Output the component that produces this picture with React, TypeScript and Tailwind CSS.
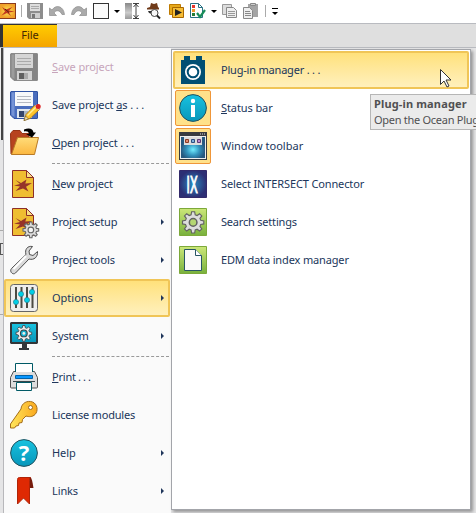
import React from 'react';

type IconProps = { children: React.ReactNode; size?: number; box?: number };
const Svg = ({ children, size = 28, box = 28 }: IconProps) => (
  <svg width={size} height={size} viewBox={`0 0 ${box} ${box}`} className="block shrink-0 overflow-visible">
    {children}
  </svg>
);

const Disk = ({ blue = false }: { blue?: boolean }) => (
  <Svg>
    <path d="M1 .5h26a.5.5 0 0 1 .5.5v26a.5.5 0 0 1-.5.5H4L.5 24V1z" fill={blue ? '#4a6dbd' : '#858585'} stroke={blue ? '#2f52a3' : '#8b8b8b'} />
    <path d="M1.5 1.5h3V26l-3-2z" fill={blue ? '#7593d6' : '#9c9c9c'} />
    <path d="M5 1h18v14H5z" fill={blue ? '#f7f8fa' : '#d6d6d6'} />
    <path d="M7 5.5h14M7 8.5h14M7 11.5h14" stroke={blue ? '#b5b9c2' : '#aaa'} />
    <path d="M7 18h15v9H7z" fill={blue ? '#dfe7ee' : '#d2d2d2'} />
    <path d="M9 20h5v6H9z" fill={blue ? '#34466c' : '#606060'} />
    <path d="M14 20h4v6h-4z" fill={blue ? '#a9b5c3' : '#aaa'} />
    {blue && (
      <>
        <path d="M14 29.5l2-6L25 14l4.5 4.5-9.500 9z" fill="#ffc52b" stroke="#a57416" strokeWidth=".8" />
        <path d="M17.500 24.500l9-9" stroke="#fff09b" strokeWidth="1.4" />
        <path d="M14 29.500l1.500-4.500 3 3z" fill="#f5e4b0" stroke="#614d23" strokeWidth=".6" />
        <path d="M24.500 15l2-1.500 4 4-2 1.500z" fill="#c3ccd1" />
        <circle cx="28.200" cy="15.500" r="2.500" fill="#dd2222" />
      </>
    )}
  </Svg>
);

const ProjectPage = () => (
  <>
    <path d="M2.5.5h14l7 7v20h-21z" fill="#efbd31" stroke="#8d2f29" />
    <path d="M16.5.5v7h7z" fill="#f9de83" stroke="#8d2f29" />
    <path d="M5.500 10l5.500 3 5.500-3.500-1.200 4 6.700-.5-6 3.800 2.500 4.700-5.500-3-7.500 2.500 4.500-4.500-6-1 6-1.500z" fill="#963329" />
  </>
);
const gearPath = 'M12 1h4l.7 4 2.5 1 3.3-2.4 2.9 2.9L23 9.8l1 2.5 4 .7v4l-4 .7-1 2.5 2.4 3.3-2.9 2.9-3.3-2.4-2.5 1-.7 4h-4l-.7-4-2.5-1-3.3 2.4-2.9-2.9L5 20.2l-1-2.5-4-.7v-4l4-.7 1-2.5-2.4-3.3 2.9-2.9L8.800 6l2.500-1z';

const OpenIcon = () => (
  <Svg>
    <path d="M.5 4.500L3 1.500h7l2 3h7v17L1 25z" fill="#b7431f" stroke="#963315" />
    <path d="M7.500 8.500H28.500L24.500 25.500H1.500z" fill="url(#folder)" stroke="#b97a25" />
    <path d="M14 .5c5-2 9-1 9.500 3h2.500l-4 5-6-3.500h3c-.5-2.500-2-3-5-2.500z" fill="#000" />
  </Svg>
);
const NewIcon = () => <Svg><ProjectPage /></Svg>;
const SetupIcon = () => (
  <Svg>
    <ProjectPage />
    <g transform="translate(13 13.5) scale(.56)">
      <path d={gearPath} fill="#ddd" stroke="#666" strokeWidth="2" />
      <circle cx="14" cy="15" r="5" fill="#f6f6f6" stroke="#666" strokeWidth="2" />
    </g>
  </Svg>
);
const ToolsIcon = () => (
  <Svg>
    <path d="M22.500.5c-5-1-8 3-6.500 8L1.500 22.500c-2.500 3 1.500 7 4 4.500L19 13c5 1.500 9-2 8.500-7.500L23 9.500l-3.500-1-.5-3.500z" fill="#d9d9d9" stroke="#4e4e4e" />
    <path d="M16 10L3.500 23" stroke="#fff" strokeWidth="2" />
  </Svg>
);
const OptionsIcon = () => (
  <Svg>
    <rect x=".5" y=".5" width="27" height="27" rx="3" fill="#eee" stroke="#666" />
    <path d="M6 3v21M11.500 3v21M17 3v21M22.500 3v21" stroke="#4b4a43" strokeWidth="2" />
    {[[6, 18], [11, 10], [17, 16], [22, 8]].map(([x, y]) => (
      <circle key={x} cx={x} cy={y} r="2.600" fill="#00cfe7" stroke="#257484" strokeWidth=".6" />
    ))}
  </Svg>
);
const SystemIcon = () => (
  <Svg>
    <path d="M1 0h26l1 1v20l-1 1H17v4h2v2H9v-2h3v-4H1l-1-1V1z" fill="#323639" />
    <path d="M2 2h24v18H2z" fill="url(#cyan)" />
    <g transform="translate(6 3) scale(.56)">
      <path d={gearPath} fill="#eee" stroke="#394247" strokeWidth="1.5" />
      <circle cx="14" cy="15" r="6" fill="#10b2d2" stroke="#394247" strokeWidth="2" />
      <circle cx="14" cy="15" r="2.500" fill="#eee" />
    </g>
  </Svg>
);
const PrintIcon = () => (
  <Svg>
    <path d="M3.500 8.500h21l3 6v9.500q0 1-1 1h-25q-1 0-1-1v-9.500z" fill="#ddd" stroke="#505050" />
    <path d="M5.500 9V.500h17V9" fill="#fff" stroke="#005a66" />
    <path d="M5.500 12.500h17v3h-17z" fill="#0796ff" stroke="#0064aa" />
    <path d="M3 18.500h22" stroke="#39474b" />
    <path d="M6.500 19.500h15v8h-15z" fill="#fff" stroke="#005a66" />
  </Svg>
);
const KeyIcon = () => (
  <Svg>
    <path d="M11 8c.5-6 6.500-9 11.500-7s6 9 2.500 12.500c-2.500 2.500-6 2.500-9 1.500l-3.500 3.500-.5 3-3 .5-.5 2.500-2.500.5-1.500 2H.5v-4z" fill="url(#key)" stroke="#a46d18" />
    <circle cx="20.500" cy="6.500" r="2" fill="#fff" stroke="#9b6b20" />
  </Svg>
);
const RoundIcon = ({ info = false }: { info?: boolean }) => (
  <Svg>
    <circle cx="14" cy="14" r="13.400" fill="url(#cyan)" stroke="#24515d" />
    {info ? (
      <>
        <circle cx="14" cy="7" r="2.200" fill="#fff" />
        <rect x="12" y="11" width="4" height="12" fill="#fff" />
      </>
    ) : (
      <text x="14" y="22" textAnchor="middle" fontSize="22" fontWeight="700" fill="#fff" className="[font-family:'Open_Sans',sans-serif]">?</text>
    )}
  </Svg>
);
const BookmarkIcon = () => (
  <Svg>
    <path d="M19 0c2.500 0 3 2 4.500 11h-4z" fill="#761b0c" />
    <path d="M7.500 2.500c0-1.500 1-2 2-2h11c-1 .5-1 1.500-1 3V27l-6-6-6 6z" fill="#df2903" stroke="#b02408" />
  </Svg>
);
const PluginIcon = () => (
  <Svg>
    <path d="M5 0h6v4h6V0h6v4h3v24H2V4h3z" fill="#004f73" />
    <circle cx="14" cy="16" r="8" fill="#fff" />
    <circle cx="14" cy="16" r="5.300" fill="#fff" stroke="#004f73" strokeWidth="2" />
  </Svg>
);
const WindowIcon = () => (
  <Svg>
    <path d="M0 0h28v28H0z" fill="#383b40" />
    <path d="M1 4h26v23H1z" fill="#eee" />
    <path d="M2 5h24v21H2z" fill="url(#window)" />
    <path d="M5 5h18v8H5z" fill="#ddd" />
    <path d="M6.500 7.500h3v3h-3z" fill="#e08a70" stroke="#8a3a26" />
    <path d="M12.500 7.500h3v3h-3z" fill="#7fb0dc" stroke="#2e4f80" />
    <path d="M18.500 7.500h3v3h-3z" fill="#bd8bd0" stroke="#5b3b74" />
    <path d="M21 2h1m1 0h1m1 0h1" stroke="#ddd" />
  </Svg>
);
const IXIcon = () => (
  <Svg>
    <path d="M.5.500h27v27H.500z" fill="url(#ix)" stroke="#332a6a" />
    <text transform="translate(7.400 22.500) scale(.48 1)" fontSize="24" letterSpacing="1" fill="#fff" stroke="#fff" strokeWidth="1.200" className="[font-family:'Liberation_Sans',Arial,sans-serif]">IX</text>
  </Svg>
);
const SearchIcon = () => (
  <Svg>
    <path d="M.5.500h27v27H.500z" fill="url(#green)" stroke="#7da93a" />
    <g transform="translate(3.500 3) scale(.76)">
      <path d={gearPath} fill="#ddd" stroke="#626262" strokeWidth="1.500" />
      <circle cx="14" cy="15" r="5" fill="#b4d672" stroke="#626262" strokeWidth="2" />
    </g>
  </Svg>
);
const EdmIcon = () => (
  <Svg>
    <path d="M.5.500h27v27H.500z" fill="url(#green)" stroke="#7da93a" />
    <path d="M5.500 3.500h11l6 6v15h-17z" fill="#fafafa" stroke="#295564" />
    <path d="M16.500 3.500v6h6" fill="#fff" stroke="#295564" />
  </Svg>
);

type Item = {
  label: React.ReactNode;
  icon: React.ReactNode;
  arrow?: boolean;
  disabled?: boolean;
  active?: boolean;
  checked?: boolean;
  spacing?: string;
};
const U = ({ children }: { children: string }) => <span className="underline decoration-1 underline-offset-[1px]">{children}</span>;
const tight = 'tracking-[-.2px]';
const normal = 'tracking-normal';

const left: (Item | null)[] = [
  { label: <><U>S</U>ave project</>, icon: <Disk />, disabled: true },
  { label: <>Save project <U>a</U>s . . .</>, icon: <Disk blue />, spacing: 'tracking-[-.12px]' },
  { label: <><U>O</U>pen project . . .</>, icon: <OpenIcon />, spacing: 'tracking-[-.15px]' },
  null,
  { label: <><U>N</U>ew project</>, icon: <NewIcon /> },
  { label: 'Project setup', icon: <SetupIcon />, arrow: true, spacing: tight },
  { label: 'Project tools', icon: <ToolsIcon />, arrow: true },
  { label: 'Options', icon: <OptionsIcon />, arrow: true, active: true, spacing: normal },
  { label: 'System', icon: <SystemIcon />, arrow: true },
  null,
  { label: <><U>P</U>rint . . .</>, icon: <PrintIcon />, spacing: 'tracking-[-.2px] [word-spacing:-.4px]' },
  { label: 'License modules', icon: <KeyIcon />, spacing: tight },
  { label: 'Help', icon: <RoundIcon />, arrow: true },
  { label: 'Links', icon: <BookmarkIcon />, arrow: true },
];
const right: Item[] = [
  { label: 'Plug-in manager . . .', icon: <PluginIcon />, active: true, spacing: 'tracking-[-.2px]' },
  { label: <><U>S</U>tatus bar</>, icon: <RoundIcon info />, checked: true },
  { label: 'Window toolbar', icon: <WindowIcon />, checked: true, spacing: normal },
  { label: 'Select INTERSECT Connector', icon: <IXIcon />, spacing: 'tracking-[-.13px]' },
  { label: 'Search settings', icon: <SearchIcon />, spacing: tight },
  { label: 'EDM data index manager', icon: <EdmIcon />, spacing: 'tracking-[-.14px]' },
];
const Caret = () => <span className="mt-px block h-0 w-0 border-x-[3px] border-t-[3px] border-x-transparent border-t-black" />;

const ToolBar = () => (
  <header className="flex h-[23px] items-center bg-white pb-px">
    <Svg size={16} box={16}>
      <path d="M0 0h16v16H0z" fill="#8a3a1c" />
      <path d="M0 1h15v14H0z" fill="url(#logo)" />
      <path d="M2 4l4 2.500L12.500 4 9 7.500l5.500 1L9 9.500l2 3.500-4-3-5.500 2.500L5 8.500z" fill="#c23a1e" />
      <path d="M5 6l4 3.500" stroke="#4d2416" />
    </Svg>
    <i className="ml-[5px] h-3 w-px bg-[#aaa]" />
    <div className="ml-[5px]">
      <Svg size={16} box={16}>
        <path d="M0 0h16v16H2l-2-2z" fill="#8d8d8d" />
        <path d="M3 1h10v7H3z" fill="#ddd" />
        <path d="M4 3.500h8M4 5.500h8" stroke="#aaa" />
        <path d="M4 10h9v5H4z" fill="#ccc" />
        <path d="M5 11h3v4H5z" fill="#777" />
      </Svg>
    </div>
    <div className="ml-[6px]">
      <Svg size={16} box={16}>
        <path d="M.5 5v7.500h7L5 10c2-3.500 6-3 8 1.500h2.500C14.500 3 7 1 3 7z" fill="#aaa" stroke="#8c8c8c" strokeWidth=".7" />
      </Svg>
    </div>
    <div className="ml-[6px]">
      <Svg size={16} box={16}>
        <path d="M15.500 5v7.500h-7L11 10c-2-3.500-6-3-8 1.500H.500C1.500 3 9 1 13 7z" fill="#aaa" stroke="#8c8c8c" strokeWidth=".7" />
      </Svg>
    </div>
    <div className="ml-[6px] h-4 w-4 border border-[#333] bg-[#fafafa]" />
    <div className="ml-[5px]"><Caret /></div>
    <div className="ml-[5px]">
      <Svg size={16} box={16}>
        <path d="M0 0h7v16H0z" fill="url(#gray)" />
        <path d="M8 .500h6M8 15.500h6M11 1v14M8.500 4L11 1l2.500 3M8.500 12l2.500 3 2.500-3" stroke="#444" fill="none" />
      </Svg>
    </div>
    <div className="ml-[6px]">
      <Svg size={16} box={16}>
        <path d="M0 5l3-1 1-4 3 1 3-1 1 4 1 1v1.500H0z" fill="#703b1a" />
        <path d="M1 8h4v3l-3-1z" fill="#333" />
        <circle cx="7.500" cy="10" r="3.500" fill="#f8f8f8" stroke="#444" />
        <path d="M10 12.500l3 3" stroke="#222" strokeWidth="2" />
      </Svg>
    </div>
    <div className="ml-[6px]">
      <Svg size={16} box={16}>
        <path d="M.5 1.500h11v10H.500z" fill="#e6a91b" stroke="#be7a00" />
        <path d="M3.500 4.500h11v10h-11z" fill="#f6bd35" stroke="#a86700" />
        <path d="M6 6l7 3.500L6 13z" fill="#222" />
      </Svg>
    </div>
    <div className="ml-[5px]">
      <Svg size={16} box={16}>
        <path d="M.5.500h8l4 4v10H.500z" fill="#fff" stroke="#287083" />
        <path d="M8.500.500v4h4" fill="none" stroke="#287083" />
        <path d="M2 2h3v3H2z" fill="#e6362e" />
        <path d="M2 6h3v3H2z" fill="#ee9627" />
        <path d="M2 10h3v3H2z" fill="#287c34" />
        <path d="M7 10l3 4 5-7" fill="none" stroke="#178c58" strokeWidth="2.200" />
      </Svg>
    </div>
    <div className="ml-[5px]"><Caret /></div>
    <div className="ml-[5px]">
      <Svg size={16} box={16}>
        <path d="M.5 1.500h9v10h-9z" fill="#ddd" stroke="#999" />
        <path d="M4.500 4.500h7l3 3v7h-10z" fill="#eee" stroke="#888" />
        <path d="M6 8.500h7M6 10.500h7M6 12.500h7" stroke="#999" />
      </Svg>
    </div>
    <div className="ml-[5px]">
      <Svg size={16} box={16}>
        <path d="M5 1h10v13H5z" fill="#a4a4a4" />
        <path d="M7.500.500h5v2h-5z" fill="#ccc" stroke="#888" />
        <path d="M.5 4.500h6l3 3v8h-9z" fill="#eee" stroke="#888" />
        <path d="M2 8.500h5M2 10.500h6M2 12.500h6" stroke="#888" />
      </Svg>
    </div>
    <i className="ml-[6px] h-3 w-px bg-[#aaa]" />
    <div className="ml-[6px] border-t border-black pt-[2px]"><Caret /></div>
  </header>
);

const highlight = 'rounded-[2px] border-2 border-[#f0c557] bg-linear-to-b from-[#ffe17b] to-[#fff0bc]';

export default function App() {
  return (
    <main className="relative h-[513px] w-[476px] overflow-hidden bg-[#e5e5e6] text-[11px] leading-4 text-[#20365b] [font-family:'Noto_Sans','Open_Sans',sans-serif]">
      <svg className="absolute h-0 w-0">
        <defs>
          <linearGradient id="folder" x2="0" y2="1"><stop stopColor="#ffdc79" /><stop offset="1" stopColor="#fbb740" /></linearGradient>
          <linearGradient id="cyan" x2="0" y2="1"><stop stopColor="#18c2df" /><stop offset="1" stopColor="#0796ba" /></linearGradient>
          <linearGradient id="key"><stop stopColor="#ffe55b" /><stop offset="1" stopColor="#faa91e" /></linearGradient>
          <linearGradient id="green" x2="0" y2="1"><stop stopColor="#cce779" /><stop offset="1" stopColor="#78b13c" /></linearGradient>
          <linearGradient id="gray" x2="0" y2="1"><stop stopColor="#888" /><stop offset=".6" stopColor="#ccc" /><stop offset="1" stopColor="#999" /></linearGradient>
          <radialGradient id="window" cy=".6"><stop stopColor="#72edff" /><stop offset=".55" stopColor="#3393bd" /><stop offset="1" stopColor="#275980" /></radialGradient>
          <radialGradient id="ix"><stop stopColor="#288bbf" /><stop offset="1" stopColor="#2c2f74" /></radialGradient>
          <radialGradient id="logo"><stop stopColor="#ffe95a" /><stop offset="1" stopColor="#f0a02a" /></radialGradient>
        </defs>
      </svg>
      <ToolBar />
      <div className="flex h-[25px] border-y border-[#b9bbc0] bg-[#dfdfdf]">
        <div className="flex w-[57px] items-center justify-center border-l-[3px] border-t border-[#333] bg-linear-to-b from-[#ffcc00] to-[#f4a400] pb-[3px] text-[#452800]">File</div>
      </div>
      <div className="flex h-[465px]">
        <div className="flex w-[3px] shrink-0 flex-col">
          <i className="h-[92px] border-r-2 border-[#444] bg-[#eee]" />
          <i className="h-[91px] border-b border-[#aaa]" />
          <i className="h-3" />
          <i className="h-3 w-[3px] border-y border-l border-[#555]" />
          <i className="h-[60px] border-b border-[#aaa]" />
        </div>
        <nav className="flex w-[168px] shrink-0 flex-col border-l border-[#b8b8bb] bg-[#fafafa]">
          {left.map((item, i) => item ? (
            <div key={i} className={`flex h-[38px] w-[166px] shrink-0 items-center ${item.active ? `${highlight} pl-1 pr-1` : 'pl-[6px] pr-[6px]'}`}>
              {item.icon}
              <span className={`ml-[14px] flex-1 whitespace-pre ${item.spacing ?? 'tracking-[-.1px]'} ${item.disabled ? 'text-[#c7a5bb]' : ''}`}>{item.label}</span>
              {item.arrow && <i className="block h-0 w-0 border-y-[3px] border-l-[3px] border-y-transparent border-l-[#20365b]" />}
            </div>
          ) : (
            <i key={i} className="ml-12 flex h-[3px] w-[117px] shrink-0 items-center"><i className="w-full border-t border-dashed border-[#999]" /></i>
          ))}
        </nav>
        <section className="mt-px flex h-[461px] w-[300px] shrink-0 flex-col border border-[#a3a5aa] bg-white pt-px shadow-[2px_2px_3px_rgba(0,0,0,.35)]">
          {right.map((item, i) => (
            <div key={i} className={`flex h-[38px] items-center ${item.active ? `${highlight} mx-px` : 'pl-[3px]'}`}>
              <div className={`flex h-9 w-9 shrink-0 items-center justify-center ${item.checked ? 'rounded-[2px] border border-[#ef9639] bg-[#ffe18a]' : ''}`}>{item.icon}</div>
              <span className={`ml-[10px] whitespace-pre ${item.spacing ?? 'tracking-[-.1px]'}`}>{item.label}</span>
            </div>
          ))}
        </section>
      </div>
      <aside className="absolute left-[370px] top-[94px] h-9 w-[120px] border border-[#b6b6b6] bg-[#ebebeb] pl-[3px] text-[#505052]">
        <strong className="block whitespace-nowrap pt-px tracking-[.15px]">Plug-in manager</strong>
        <span className="block whitespace-nowrap tracking-[-.28px]">Open the Ocean Plug</span>
      </aside>
      <svg className="absolute left-[440px] top-[69px]" width="13" height="21">
        <path d="M.5.500v15l3.500-3.500 3 6 2-1-3-6h5z" fill="white" stroke="#333" />
      </svg>
    </main>
  );
}
